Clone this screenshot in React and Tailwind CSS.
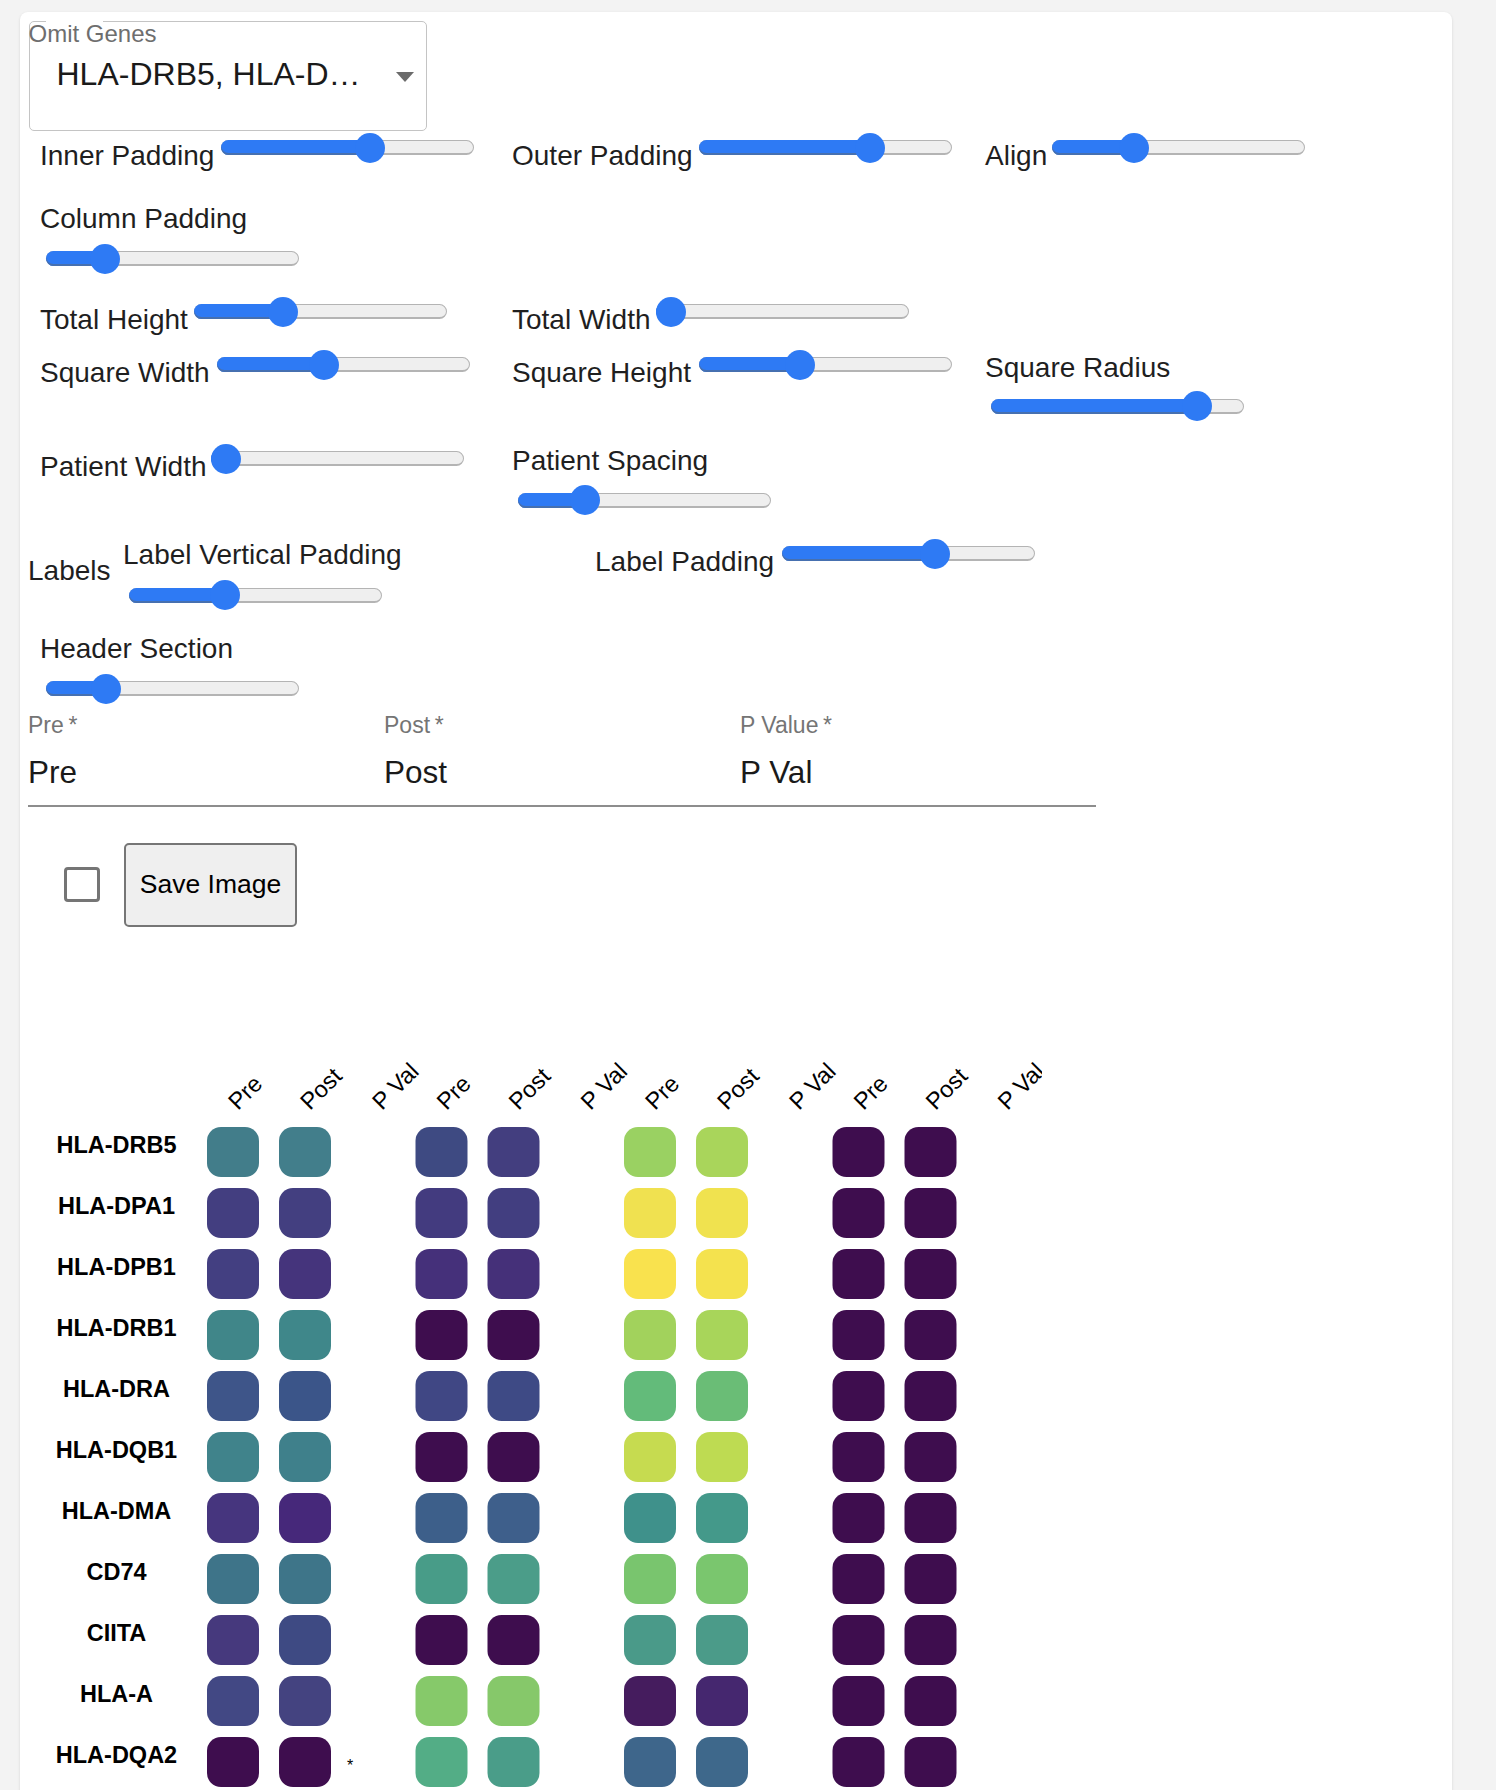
import React from 'react';

const Slider = ({ at, className = '' }) => (
  <div className={`relative w-[253px] h-[15px] shrink-0 rounded-full bg-[#efefef] border border-[#b4b4b4] border-b-2 ${className}`}>
    <div
      className="absolute left-[-1px] top-[-1px] bottom-[-2px] rounded-full bg-[#2e7af4] shadow-[inset_0_-2px_0_#4670b0]"
      style={{ width: at }}
    />
    <div
      className="absolute top-[-8.5px] w-[30px] h-[30px] rounded-full bg-[#2e7af4]"
      style={{ left: at - 16 }}
    />
  </div>
);

// label and slider on one line
const Inline = ({ label, labelW, at, className = '' }) => (
  <div className={`flex items-start ${className}`}>
    <span className={`${labelW} shrink-0 mt-[2px] text-[28px] leading-none whitespace-nowrap`}>{label}</span>
    <Slider at={at} />
  </div>
);

// label with slider wrapped underneath
const Stacked = ({ label, at, gap, className = '' }) => (
  <div className={className}>
    <div className="text-[28px] leading-none whitespace-nowrap">{label}</div>
    <Slider at={at} className={`ml-[6px] ${gap}`} />
  </div>
);

const TextField = ({ label, value }) => (
  <div className="w-[356px]">
    <div className="text-[23px] leading-none text-[#757575]">{label}{'\u2009*'}</div>
    <div className="mt-[20px] text-[31.5px] leading-none text-[#1a1a1a]">{value}</div>
  </div>
);

const D = '#3e0d4e';
const genes = [
  ['HLA-DRB5', ['#427d8a', '#427e8b', '#3e4a82', '#433e7f', '#9ad162', '#a9d55b', D, D]],
  ['HLA-DPA1', ['#433e80', '#433f80', '#433b7f', '#423e80', '#f0e150', '#f0e24f', D, D]],
  ['HLA-DPB1', ['#433f81', '#45347c', '#45307a', '#453079', '#f9e24e', '#f4e24e', D, D]],
  ['HLA-DRB1', ['#408689', '#3f878a', D, D, '#a2d25c', '#a8d55a', D, D]],
  ['HLA-DRA', ['#3e5589', '#3b5589', '#404784', '#3e4a85', '#63bb7a', '#6abd76', D, D]],
  ['HLA-DQB1', ['#40838b', '#3f808b', D, D, '#c6db50', '#bedb52', D, D]],
  ['HLA-DMA', ['#46357e', '#46287a', '#3d5f8a', '#3e5f8b', '#3f918b', '#44998a', D, D]],
  ['CD74', ['#3e7489', '#3e7589', '#489c88', '#4b9d89', '#79c56e', '#7ac66e', D, D]],
  ['CIITA', ['#46397d', '#3e4a83', D, D, '#4a9a89', '#4b9b89', D, D]],
  ['HLA-A', ['#424884', '#444380', '#86c96a', '#86c86a', '#451c5e', '#45276f', D, D]],
  ['HLA-DQA2', [D, D, '#53ad86', '#4a9d89', '#3e668b', '#3e688b', D, D]],
];

const heads = ['Pre', 'Post', 'P Val'];

const Heatmap = () => (
  <svg width="1014" height="760" className="block mt-[114px]" fontFamily="'Liberation Sans', Arial, sans-serif">
    {[0, 1, 2, 3].map((g) =>
      heads.map((h, c) => {
        const x = 210 + g * 208.5 + c * 72;
        return (
          <text key={`${g}-${c}`} x={x} y={70} fontSize="23.5" fill="#000" transform={`rotate(-45 ${x} 70)`}>
            {h}
          </text>
        );
      })
    )}
    {genes.map(([name, colors], r) => {
      const y = 86 + r * 61;
      return (
        <g key={name}>
          <text x={88.5} y={y + 26} fontSize="23.5" fontWeight="bold" textAnchor="middle" fill="#000">
            {name}
          </text>
          {colors.map((col, i) => {
            const g = Math.floor(i / 2);
            const c = i % 2;
            return (
              <rect key={i} x={179 + g * 208.5 + c * 72} y={y} width="52" height="50" rx="14" fill={col} />
            );
          })}
        </g>
      );
    })}
    <text x={322} y={729.5} fontSize="16" textAnchor="middle" fill="#000">*</text>
  </svg>
);

export default function App() {
  return (
    <div className="h-[1790px] overflow-hidden bg-[#f3f3f3] pt-[12px] pl-[20px] font-['Liberation_Sans',Arial,sans-serif] text-[#1f1f1f]">
      <div className="w-[1432px] min-h-[1800px] bg-white rounded-[8px] shadow-[0_1px_3px_rgba(0,0,0,0.12)] pt-[9px] pl-[8px]">
        {/* omit genes select */}
        <div className="relative ml-[1px] w-[398px] h-[110px] rounded-[5px] border-[1.5px] border-[#c4c4c4] pl-[26.5px] pt-[36.4px]">
          <div className="absolute top-[-1.5px] left-[15.5px] w-[57px] h-[1.5px] bg-white" />
          <span className="absolute top-0 left-[-1.5px] text-[24px] leading-none text-[#6e6e6e] whitespace-nowrap">Omit Genes</span>
          <div className="text-[32px] leading-none text-[#1a1a1a] whitespace-nowrap">HLA-DRB5, HLA-D…</div>
          <svg className="absolute right-[12.5px] top-[49.5px]" width="18" height="10" viewBox="0 0 18 10">
            <path d="M0 0 L18 0 L9 10 Z" fill="#6b6b6b" />
          </svg>
        </div>

        <div className="mt-[9px] h-[65px] pl-[12px] flex items-start">
          <Inline className="w-[472px]" label="Inner Padding" labelW="w-[181px]" at={149} />
          <Inline className="w-[473px]" label="Outer Padding" labelW="w-[187px]" at={171} />
          <Inline label="Align" labelW="w-[67px]" at={82} />
        </div>

        <div className="h-[99px] pl-[12px]">
          <Stacked label="Column Padding" at={59} gap="mt-[18px]" />
        </div>

        <div className="h-[50px] pl-[12px] flex items-start">
          <Inline className="w-[472px]" label="Total Height" labelW="w-[154px]" at={89} />
          <Inline label="Total Width" labelW="w-[144px]" at={15} />
        </div>

        <div className="h-[93px] pl-[12px] flex items-start">
          <Inline className="w-[472px] mt-[3px]" label="Square Width" labelW="w-[177px]" at={107} />
          <Inline className="w-[473px] mt-[3px]" label="Square Height" labelW="w-[187px]" at={101} />
          <Stacked label="Square Radius" at={206} gap="mt-[16.5px]" />
        </div>

        <div className="h-[94px] pl-[12px] flex items-start">
          <Inline className="w-[472px] mt-[4px]" label="Patient Width" labelW="w-[171px]" at={15} />
          <Stacked label="Patient Spacing" at={67} gap="mt-[17.5px]" />
        </div>

        <div className="h-[94px] flex items-start">
          <span className="w-[95px] mt-[16px] text-[28px] leading-none">Labels</span>
          <Stacked className="w-[472px]" label="Label Vertical Padding" at={96} gap="mt-[18.5px]" />
          <Inline className="mt-[5px]" label="Label Padding" labelW="w-[187px]" at={153} />
        </div>

        <div className="h-[79px] pl-[12px]">
          <Stacked label="Header Section" at={60} gap="mt-[18px]" />
        </div>

        <div className="flex w-[1068px] pb-[16px] border-b-2 border-[#8d8d8d]">
          <TextField label="Pre" value="Pre" />
          <TextField label="Post" value="Post" />
          <TextField label="P Value" value="P Val" />
        </div>

        <div className="mt-[36px] pl-[36px] flex items-center gap-[24px]">
          <div className="w-[36px] h-[35px] rounded-[4px] border-[3px] border-[#757575] bg-white" />
          <button className="w-[173px] h-[84px] rounded-[5px] border-2 border-[#767676] bg-[#efefef] text-[26.5px] text-black">
            Save Image
          </button>
        </div>

        <Heatmap />
      </div>
    </div>
  );
}
